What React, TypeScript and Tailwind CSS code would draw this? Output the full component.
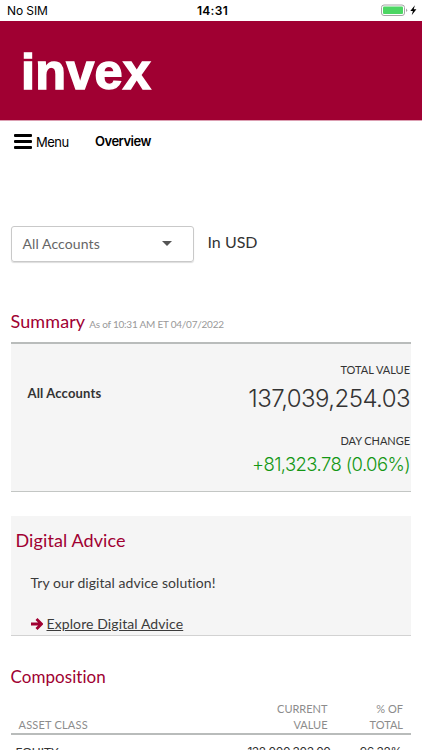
import React from 'react';

function StatusBar() {
  return (
    <div className="grid h-[21px] grid-cols-3 items-center px-[7px] font-['Inter',sans-serif] text-[12px] leading-[21px] text-black">
      <span className="tracking-[-0.1px]">No SIM</span>
      <span className="pl-[3px] text-center font-semibold tracking-[0.3px]">14:31</span>
      <svg className="-mr-[4px] justify-self-end" width="38" height="13" viewBox="0 0 38 13">
        <rect x="0.5" y="1" width="23" height="10.5" rx="2.5" fill="none" stroke="#a5a5a5" />
        <rect x="2" y="2.5" width="20" height="7.5" rx="1" fill="#4cd663" />
        <path d="M25 4.5v3.6q1.2-.6 1.2-1.8T25 4.5z" fill="#a5a5a5" />
        <path d="M33.9 1.3 29.3 7h2.6l-1.2 4.2 4.7-5.9h-2.7z" fill="#000" />
      </svg>
    </div>
  );
}

function Navigation() {
  return (
    <nav className="flex h-[40px] items-center pl-[14px] text-[13px] leading-[20px] text-black">
      <div className="flex w-[18px] flex-col gap-[3px]">
        <span className="h-[3px] rounded-[1px] bg-black" />
        <span className="h-[3px] rounded-[1px] bg-black" />
        <span className="h-[3px] rounded-[1px] bg-black" />
      </div>
      <span className="mt-px ml-[4px] w-[59px] font-['Inter',sans-serif] tracking-[-0.5px]">Menu</span>
      <span className="font-['Inter',sans-serif] font-semibold tracking-[-0.5px]">Overview</span>
    </nav>
  );
}

function SummaryCard() {
  return (
    <section className="flex h-[150px] justify-between border-t-2 border-b border-t-[#b9bcbb] border-b-[#c3c6c4] bg-[#f5f5f5] pl-[17px] text-[#333]">
      <h3 className="pt-[39px] text-[13px] leading-[20px] font-bold tracking-[0.15px]">All Accounts</h3>
      <div className="flex flex-col items-end pr-px">
        <span className="mt-[16px] text-[11px] leading-[20px]">TOTAL VALUE</span>
        <span className="mt-px font-['Inter',sans-serif] text-[24px] leading-[36px] font-light tracking-[-0.55px]">137,039,254.03</span>
        <span className="mt-[14px] text-[11px] leading-[20px] tracking-[-0.05px]">DAY CHANGE</span>
        <span className="font-['Inter',sans-serif] text-[18.5px] leading-[26px] font-light tracking-[-0.6px] text-[#149714]">+81,323.78 (0.06%)</span>
      </div>
    </section>
  );
}

function AdviceCard() {
  return (
    <section className="mt-[24px] h-[120px] border-b border-[#d2d2d2] bg-[#f5f5f5] text-[14px] leading-[20px] text-[#3b3b3b]">
      <h2 className="pt-[11px] pl-[5px] text-[18px] leading-[26px] tracking-[0.1px] text-[#a00032]">Digital Advice</h2>
      <p className="mt-[20px] ml-[20px] tracking-[0.06px]">Try our digital advice solution!</p>
      <a className="mt-[21px] ml-[20px] flex items-center" href="#advice">
        <svg className="mr-[4px]" width="12" height="12" viewBox="0 0 12 12" fill="none" stroke="#a00032" strokeWidth="2.8">
          <path d="M0 6h10.5M5.5 1l5 5-5 5" />
        </svg>
        <span className="tracking-[0.1px] underline underline-offset-1">Explore Digital Advice</span>
      </a>
    </section>
  );
}

function Composition() {
  return (
    <section>
      <h2 className="mt-[28px] text-[17px] leading-[26px] tracking-[0.05px] text-[#a00032]">Composition</h2>
      <table className="mt-[11px] w-full table-fixed border-collapse">
        <thead>
          <tr className="border-b-2 border-[#b9bcbb] align-bottom text-[11px] leading-[16px] text-[#8c8c8c]">
            <th className="w-[200px] pl-[8px] text-left font-normal tracking-[0.2px]">ASSET CLASS</th>
            <th className="w-[117px] text-right font-normal">CURRENT<br />VALUE</th>
            <th className="pr-[8px] text-right font-normal">% OF<br />TOTAL</th>
          </tr>
        </thead>
        <tbody>
          <tr className="text-[12px] leading-[16px] text-[#333]">
            <td className="pt-[9px] pl-[5px]">EQUITY</td>
            <td className="pt-[9px] text-right font-['Inter',sans-serif] tracking-[-0.4px]">
              <span className="-mr-[3px]">132,000,303.00</span>
            </td>
            <td className="pt-[9px] pr-[9px] text-right font-['Inter',sans-serif] tracking-[-0.3px]">96.32%</td>
          </tr>
        </tbody>
      </table>
    </section>
  );
}

export default function App() {
  return (
    <div className="h-[750px] w-[422px] overflow-hidden bg-white font-['Lato',sans-serif] [font-variant-ligatures:none]">
      <StatusBar />
      <header className="h-[100px] border-b border-[#dc9fb2] bg-[#a00032] pl-[21px] font-['Liberation_Sans',Arial,sans-serif] text-[50.5px] leading-[102px] font-bold tracking-[0.2px] text-white [-webkit-text-stroke:1.4px_white]">
        invex
      </header>
      <Navigation />
      <main className="pr-[11px] pl-[10.5px]">
        <div className="mt-[65px] flex h-[36px] items-center">
          <button className="flex h-[36px] w-[183px] items-center justify-between rounded-[3px] border border-[#c9c9c9] pr-[21px] pb-[2px] pl-[11px] text-[14px] tracking-[0.1px] text-[#666] shadow-[0_1px_1px_#ddd]">
            All Accounts
            <span className="border-x-[5px] border-t-[5px] border-x-transparent border-t-[#555]" />
          </button>
          <span className="ml-[14px] pb-[4px] text-[16px] text-[#333]">In USD</span>
        </div>
        <div className="mt-[46px] mb-[8px] flex h-[26px] items-baseline">
          <h2 className="text-[18px] leading-[26px] tracking-[0.1px] text-[#a00032]">Summary</h2>
          <span className="ml-[4px] text-[10px] tracking-[-0.23px] text-[#999]">As of 10:31 AM ET 04/07/2022</span>
        </div>
        <SummaryCard />
        <AdviceCard />
        <Composition />
      </main>
    </div>
  );
}
